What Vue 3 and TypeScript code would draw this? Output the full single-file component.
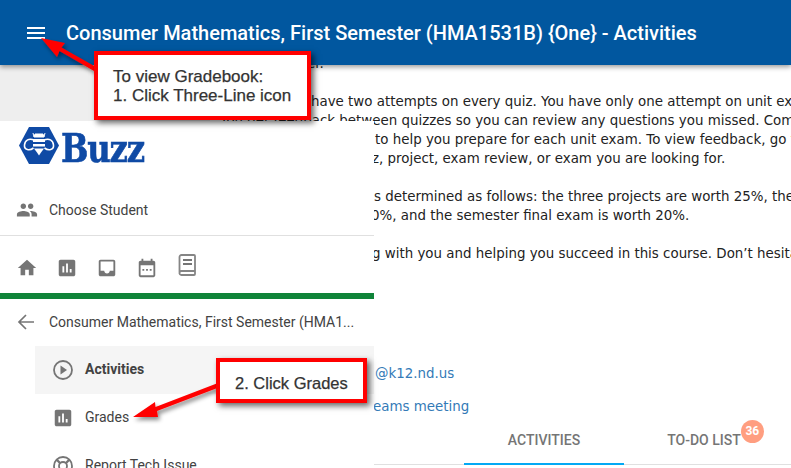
<template>
  <div class="page">
    <header class="topbar">
      <svg class="menu-icon" width="18" height="12" viewBox="0 0 18 12"><path d="M0 0h18v2H0zM0 5h18v2H0zM0 10h18v2H0z" fill="#fff" /></svg>
      <h1 class="title">Consumer Mathematics, First Semester (HMA1531B) {One} - Activities</h1>
    </header>

    <main class="content">
      <div class="letter">
        <p v-for="(para, i) in paragraphs" :key="i" class="para">
          <span
            v-for="line in para"
            :key="line.text"
            class="line"
            :style="{ paddingLeft: `${line.x}px` }"
          >{{ line.text }}</span>
        </p>
        <p class="para contact">
          <a class="line link" :style="{ paddingLeft: '375px' }">@k12.nd.us</a>
        </p>
        <p class="para meeting">
          <a class="line link" :style="{ paddingLeft: '373px' }">eams meeting</a>
        </p>
      </div>
      <nav class="tabs">
        <div class="tab active">ACTIVITIES</div>
        <div class="tab">
          <span class="tab-label">TO-DO LIST<span class="badge">36</span></span>
        </div>
      </nav>
    </main>

    <aside class="drawer">
      <div class="logo">
        <svg width="40" height="37" viewBox="0 0 40 37">
          <path d="M10 0h20l10 18.500L30 37H10L0 18.500z" fill="#0f4aa5" />
          <path d="M15 13c-5-2-9 0-9.500 5s5 6 9 3M25 13c5-2 9 0 9.500 5s-5 6-9 3" fill="none" stroke="#fff" stroke-width="1.600" />
          <path d="M14 12h12v3H14zM14 17h12v2.500H14zM15 21.500h10l-3 4-2 3-2-3z" fill="#fff" />
          <path d="M15 10l-1-4M25 10l1-4M15 10h10l-1-3h-8z" fill="#fff" stroke="#fff" stroke-width="1" />
        </svg>
        <span class="logo-text">Buzz</span>
      </div>

      <div class="student">
        <svg width="22" height="22" viewBox="0 0 24 24" fill="#757575"><path d="M16 11c1.660 0 2.990-1.340 2.990-3S17.660 5 16 5s-3 1.340-3 3 1.340 3 3 3zm-8 0c1.660 0 2.990-1.340 2.990-3S9.660 5 8 5 5 6.340 5 8s1.340 3 3 3zm0 2c-2.330 0-7 1.170-7 3.500V19h14v-2.500C15 14.170 10.330 13 8 13zm8 0c-.290 0-.620.020-.970.050 1.160.840 1.970 1.970 1.970 3.450V19h6v-2.500c0-2.330-4.670-3.500-7-3.500z" /></svg>
        <span>Choose Student</span>
      </div>

      <div class="quick-icons">
        <svg width="22" height="22" viewBox="0 0 24 24" fill="#757575"><path d="M10 20v-6h4v6h5v-8h3L12 3 2 12h3v8z" /></svg>
        <svg width="22" height="22" viewBox="0 0 24 24" fill="#757575"><path d="M19 3H5c-1.100 0-2 .900-2 2v14c0 1.100.900 2 2 2h14c1.100 0 2-.900 2-2V5c0-1.100-.900-2-2-2zM9 17H7v-7h2v7zm4 0h-2V7h2v10zm4 0h-2v-4h2v4z" /></svg>
        <svg width="22" height="22" viewBox="0 0 24 24" fill="#757575"><path d="M19 3H5c-1.100 0-2 .900-2 2v14c0 1.100.900 2 2 2h14c1.100 0 2-.900 2-2V5c0-1.100-.900-2-2-2zm0 12h-4c0 1.660-1.350 3-3 3s-3-1.340-3-3H5V5h14v10z" /></svg>
        <svg width="22" height="22" viewBox="0 0 24 24" fill="#757575"><path d="M19 4h-1V2h-2v2H8V2H6v2H5c-1.100 0-2 .900-2 2v14c0 1.100.900 2 2 2h14c1.100 0 2-.900 2-2V6c0-1.100-.900-2-2-2zm0 16H5V9h14v11zM7 13h2v2H7zm4 0h2v2h-2zm4 0h2v2h-2z" /></svg>
        <svg class="book" width="20" height="22" viewBox="0 0 20 22"><path d="M2.500 18V3A2 2 0 0 1 4.500 1h12.500a1 1 0 0 1 1 1v18a1 1 0 0 1-1 1H4.500a2 2 0 0 1-2-2.500 2 2 0 0 1 2-1.500H18" fill="none" stroke="#858585" stroke-width="1.800" /><path d="M6 6h9M6 10h9" stroke="#757575" stroke-width="2" /></svg>
      </div>

      <div class="course-nav">
        <svg width="18" height="18" viewBox="0 0 18 18"><path d="M17 9H2M9 2L2 9l7 7" fill="none" stroke="#757575" stroke-width="1.700" /></svg>
        <span>Consumer Mathematics, First Semester (HMA1...</span>
      </div>

      <ul class="menu">
        <li class="menu-item current">
          <svg width="22" height="22" viewBox="0 0 22 22"><circle cx="11" cy="11" r="9" fill="none" stroke="#757575" stroke-width="1.800" /><path d="M8.500 6.500v9l6.500-4.500z" fill="#757575" /></svg>
          <span>Activities</span>
        </li>
        <li class="menu-item">
          <svg width="22" height="22" viewBox="0 0 24 24" fill="#757575"><path d="M19 3H5c-1.100 0-2 .900-2 2v14c0 1.100.900 2 2 2h14c1.100 0 2-.900 2-2V5c0-1.100-.900-2-2-2zM9 17H7v-7h2v7zm4 0h-2V7h2v10zm4 0h-2v-4h2v4z" /></svg>
          <span>Grades</span>
        </li>
        <li class="menu-item">
          <svg width="22" height="22" viewBox="0 0 22 22" fill="none" stroke="#757575"><circle cx="11" cy="11" r="9" stroke-width="1.800" /><circle cx="11" cy="11" r="4" stroke-width="1.800" /><path d="M4.500 4.500l3.500 3.500M17.500 4.500L14 8M4.500 17.500L8 14M17.500 17.500L14 14" stroke-width="2.400" /></svg>
          <span>Report Tech Issue</span>
        </li>
      </ul>
    </aside>

    <!-- annotations drawn on top of the screenshot -->
    <svg class="arrows" width="791" height="468" viewBox="0 0 791 468">
      <defs>
        <filter id="arrow-shadow" x="-20%" y="-20%" width="150%" height="150%">
          <feDropShadow dx="2" dy="3" stdDeviation="2" flood-color="#000" flood-opacity="0.45" />
        </filter>
      </defs>
      <path d="M41 38L65 43 61.500 47.500 96 67 94 71 59.500 51 57 57z" fill="#f00" filter="url(#arrow-shadow)" />
      <path d="M133 417L155 402 155.500 407 218 383 220 387 157 411 158 417z" fill="#f00" filter="url(#arrow-shadow)" />
    </svg>
    <div class="callout first">To view Gradebook:<br />1. Click Three-Line icon</div>
    <div class="callout second">2. Click Grades</div>
  </div>
</template>

<script setup lang="ts">
interface Line {
  text: string
  x: number
}

// only the part of each line that isn't hidden behind the drawer
const paragraphs: Line[][] = [
  [{ text: 'your teacher.', x: 235 }],
  [
    { text: 'have two attempts on every quiz. You have only one attempt on unit exams.', x: 311 },
    { text: 'You get feedback between quizzes so you can review any questions you missed. Complete', x: 220 },
    { text: 'to help you prepare for each unit exam. To view feedback, go to the', x: 375 },
    { text: 'z, project, exam review, or exam you are looking for.', x: 372 },
  ],
  [
    { text: 's determined as follows: the three projects are worth 25%, the', x: 374 },
    { text: '0%, and the semester final exam is worth 20%.', x: 371 },
  ],
  [{ text: 'g with you and helping you succeed in this course. Don’t hesitate', x: 372 }],
]
</script>

<style>
html,
body {
  margin: 0;
  background: #fff;
  overflow: hidden;
}
</style>

<style scoped>
.page {
  position: relative;
  width: 791px;
  height: 468px;
  overflow: hidden;
  font-family: Roboto, sans-serif;
  background: #fff;
}

.topbar {
  display: flex;
  align-items: center;
  gap: 21px;
  height: 65px;
  padding-left: 27px;
  box-sizing: border-box;
  background: #01579f;
  box-shadow: 0 2px 5px rgba(0, 0, 0, 0.4);
  position: relative;
  z-index: 1;
}

.title {
  margin: 0;
  color: #fff;
  font-size: 20px;
  font-weight: 500;
  white-space: nowrap;
}

.content {
  display: flex;
  flex-direction: column;
  height: 403px;
  padding-bottom: 3px;
  box-sizing: border-box;
  background: linear-gradient(#eee, #eee) 0 0 / 210px 56px no-repeat;
}

.letter {
  flex: 1;
  min-height: 0;
  margin-top: -11px;
  overflow: hidden;
  font-family: 'DejaVu Sans', sans-serif;
  font-size: 13.400px;
  line-height: 19px;
  color: #222;
}

.para {
  margin: 0 0 19px;
}

.contact {
  margin-top: 101px;
  margin-bottom: 14px;
}

.line {
  display: block;
  white-space: nowrap;
}

.link {
  color: #337ab7;
}

.tabs {
  display: flex;
  flex: none;
  height: 38px;
  margin-left: 374px;
  padding-left: 90px;
  border-bottom: 1px solid #e0e0e0;
}

.tab {
  width: 160px;
  box-sizing: border-box;
  text-align: center;
  color: #757575;
  font-size: 14px;
  font-weight: 500;
  line-height: 28px;
}

.tab.active {
  border-bottom: 2px solid #03a9f4;
  height: 39px;
}

.tab-label {
  position: relative;
  display: inline-block;
}

.badge {
  position: absolute;
  top: -6px;
  right: -23px;
  width: 23px;
  height: 23px;
  border-radius: 50%;
  background: #ff9e80;
  color: #fff;
  font-size: 12px;
  font-weight: 700;
  line-height: 23px;
  text-align: center;
}

.drawer {
  position: absolute;
  left: 0;
  top: 121px;
  bottom: 0;
  width: 374px;
  overflow: hidden;
  background: #fff;
  color: #424242;
  font-size: 14px;
  display: flex;
  flex-direction: column;
}

.logo {
  flex: none;
  display: flex;
  align-items: flex-start;
  height: 64px;
  padding: 6px 0 0 19px;
  box-sizing: border-box;
}

.logo-text {
  display: inline-block;
  margin-left: 2px;
  color: #0f4aa5;
  font-family: 'DejaVu Serif', serif;
  font-weight: 700;
  font-size: 40px;
  line-height: 42px;
  letter-spacing: -1.500px;
  -webkit-text-stroke: 0.600px #0f4aa5;
  transform: scaleX(0.81);
  transform-origin: left center;
}

.student {
  flex: none;
  display: flex;
  align-items: center;
  gap: 11px;
  height: 50px;
  padding-left: 16px;
  border-bottom: 1px solid #e0e0e0;
}

.quick-icons {
  flex: none;
  display: flex;
  align-items: center;
  gap: 18px;
  height: 51px;
  padding: 6px 0 0 16px;
  border-bottom: 6px solid #0f8439;
}

.book {
  margin: -5px 0 0 1px;
}

.course-nav {
  flex: none;
  display: flex;
  align-items: center;
  gap: 14px;
  height: 45px;
  padding: 0 0 2px 17px;
}

.menu {
  list-style: none;
  margin: 0;
  padding: 0 0 0 35px;
}

.menu-item {
  display: flex;
  align-items: center;
  gap: 11px;
  height: 48px;
  padding-left: 17px;
}

.menu-item span {
  margin-top: -2px;
}

.menu-item.current {
  background: #f5f5f5;
  font-weight: 700;
}

.arrows {
  position: absolute;
  left: 0;
  top: 0;
  z-index: 2;
  pointer-events: none;
}

.callout {
  position: absolute;
  z-index: 3;
  box-sizing: border-box;
  border: 4px solid #f00;
  background: #fff;
  color: #333;
  font-family: 'Liberation Sans', Arial, sans-serif;
  font-size: 17px;
  line-height: 19px;
  -webkit-text-stroke: 0.250px #333;
  box-shadow: 3px 3px 6px rgba(0, 0, 0, 0.6);
  white-space: nowrap;
}

.callout.first {
  left: 94px;
  top: 51px;
  width: 217px;
  height: 69px;
  padding: 12px 0 0 15px;
}

.callout.second {
  left: 216px;
  top: 358px;
  width: 151px;
  height: 45px;
  padding: 12px 0 0 15px;
  font-size: 16.500px;
}
</style>
